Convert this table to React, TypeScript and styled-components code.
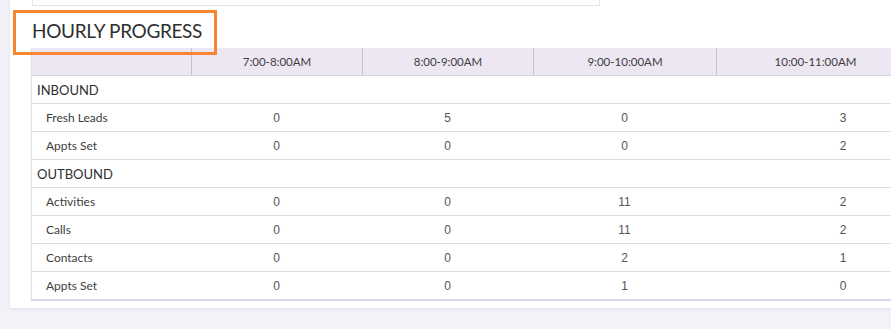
import React from "react";
import styled, { createGlobalStyle } from "styled-components";

const GlobalStyle = createGlobalStyle`
  html, body {
    margin: 0;
    padding: 0;
    background: #f4f2f9;
    font-family: Lato, "Open Sans", sans-serif;
    color: #333;
  }
`;

const Page = styled.div`
  width: 891px;
  height: 329px;
  overflow: hidden;
  padding-left: 10px;
  box-sizing: border-box;
`;

const Card = styled.section`
  position: relative;
  width: 1100px;
  height: 308px;
  background: #fff;
  box-shadow: 0 1px 3px rgba(90, 70, 130, 0.12);
  padding-left: 21px;
  box-sizing: border-box;
`;

const PrevPanel = styled.div`
  margin-left: 1px;
  width: 568px;
  height: 6px;
  border: 1px solid #e3dfec;
  border-top: none;
  box-sizing: border-box;
`;

const Title = styled.h2`
  margin: 0;
  height: 42px;
  padding-top: 14px;
  padding-left: 1px;
  box-sizing: border-box;
  font-size: 19px;
  font-weight: 400;
  line-height: 22px;
  color: #2f2f2f;
  letter-spacing: -0.35px;
`;

const Highlight = styled.div`
  position: absolute;
  left: 3px;
  top: 10px;
  width: 204px;
  height: 45px;
  border: 3px solid #f5852f;
  box-sizing: border-box;
  pointer-events: none;
`;

const Table = styled.div`
  width: 1060px;
  border-left: 1px solid #e3dfec;
  box-shadow: 0 1px 1px rgba(120, 100, 160, 0.25);
`;

const HeadRow = styled.div`
  display: grid;
  grid-template-columns: 159px 171px 171px 183px 198px 1fr;
  height: 28px;
  background: #ece7f3;
  border-bottom: 1px solid #d9d3e3;
  box-sizing: border-box;
`;

const HeadCell = styled.div<{ $first?: boolean }>`
  display: flex;
  align-items: center;
  justify-content: center;
  font-size: 11.5px;
  color: #3d3d3d;
  border-left: ${(p) => (p.$first ? "none" : "1px solid #c9c2d2")};
`;

const Row = styled.div`
  display: grid;
  grid-template-columns: 159px 171px 171px 183px 254px 1fr;
  height: 28px;
  align-items: center;
  border-bottom: 1px solid #e0dbe9;
  box-sizing: border-box;
`;

const GroupLabel = styled.div`
  padding-left: 5px;
  font-size: 13px;
  color: #2f2f2f;
  grid-column: 1 / -1;
`;

const Label = styled.div`
  padding-left: 14px;
  font-size: 12px;
  color: #3d3d3d;
`;

const Num = styled.div`
  text-align: center;
  font-family: "Liberation Sans", Arial, sans-serif;
  font-size: 12px;
  color: #555;
`;

const hours = ["7:00-8:00AM", "8:00-9:00AM", "9:00-10:00AM", "10:00-11:00AM"];

const groups = [
  {
    name: "INBOUND",
    rows: [
      { label: "Fresh Leads", values: [0, 5, 0, 3] },
      { label: "Appts Set", values: [0, 0, 0, 2] },
    ],
  },
  {
    name: "OUTBOUND",
    rows: [
      { label: "Activities", values: [0, 0, 11, 2] },
      { label: "Calls", values: [0, 0, 11, 2] },
      { label: "Contacts", values: [0, 0, 2, 1] },
      { label: "Appts Set", values: [0, 0, 1, 0] },
    ],
  },
];

export default function App() {
  return (
    <Page>
      <GlobalStyle />
      <Card>
        <PrevPanel />
        <Title>HOURLY PROGRESS</Title>
        <Highlight />
        <Table>
          <HeadRow>
            <HeadCell $first />
            {hours.map((h) => (
              <HeadCell key={h}>{h}</HeadCell>
            ))}
            <HeadCell />
          </HeadRow>
          {groups.map((g) => (
            <React.Fragment key={g.name}>
              <Row>
                <GroupLabel>{g.name}</GroupLabel>
              </Row>
              {g.rows.map((r) => (
                <Row key={g.name + r.label}>
                  <Label>{r.label}</Label>
                  {r.values.map((v, i) => (
                    <Num key={i}>{v}</Num>
                  ))}
                </Row>
              ))}
            </React.Fragment>
          ))}
        </Table>
      </Card>
    </Page>
  );
}
